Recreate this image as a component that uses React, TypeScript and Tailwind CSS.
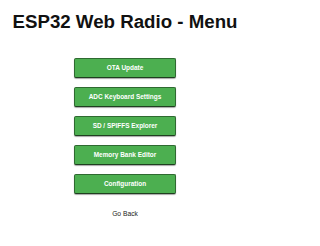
import React from "react";

const items = [
  "OTA Update",
  "ADC Keyboard Settings",
  "SD / SPIFFS Explorer",
  "Memory Bank Editor",
  "Configuration",
];

export default function App() {
  return (
    <div
      className="w-[250px] h-[246px] bg-white flex flex-col items-center pt-[11px]"
      style={{ fontFamily: '"Liberation Sans", Arial, sans-serif' }}
    >
      <h1 className="text-[18.7px] leading-[22px] font-bold text-[#111] whitespace-nowrap">
        ESP32 Web Radio - Menu
      </h1>
      <div className="mt-[25.3px] flex flex-col gap-[9.7px]">
        {items.map((t) => (
          <button
            key={t}
            className="w-[102px] h-[19.3px] rounded-[2px] bg-[#4caf50] border border-[#2f6a31] border-b-[#1f3f20] shadow-[0_1px_1px_rgba(0,0,0,0.35)] text-white font-bold text-[6.45px] leading-none flex items-center justify-center"
          >
            {t}
          </button>
        ))}
      </div>
      <div className="mt-[16.7px] text-[6.7px] leading-[8px] text-[#222]">Go Back</div>
    </div>
  );
}
